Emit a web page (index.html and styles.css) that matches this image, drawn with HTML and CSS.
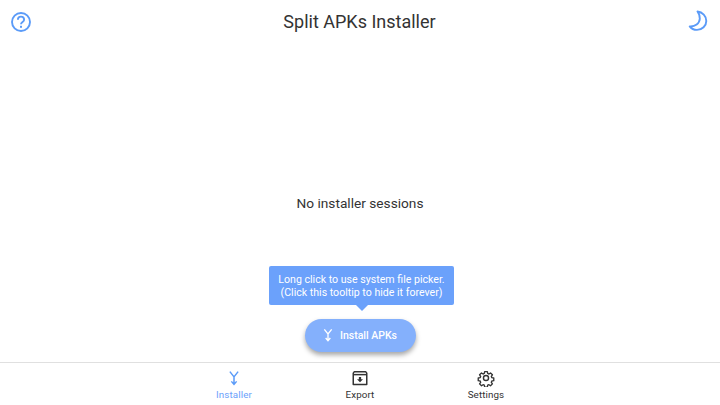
FILE: index.html
```html
<!DOCTYPE html>
<html>
<head>
<meta charset="utf-8">
<title>Split APKs Installer</title>
<link rel="stylesheet" href="styles.css">
</head>
<body>
<div class="app">
  <header class="top">
    <svg class="ico" viewBox="0 0 24 24" width="24" height="24"><circle cx="12" cy="12" r="9" fill="none" stroke="#5b9bf8" stroke-width="1.900"/><path d="M8.900 9.700a3.100 3.100 0 0 1 6.200 0c0 2.200-3.100 2.300-3.100 4.500" fill="none" stroke="#5b9bf8" stroke-width="1.900"/><rect x="11" y="15.800" width="2" height="2" fill="#5b9bf8"/></svg>
    <h1 class="title">Split APKs Installer</h1>
    <svg class="ico" viewBox="0 0 24 24" width="24" height="24"><path d="M11.500 1.500c5 .6 8.800 4.500 8.800 9.400 0 5-4.200 9-9.300 9-3 0-5.700-1.300-7.300-3.500 5.400.4 9.800-2.800 10.100-7.600.1-2.800-.8-5.300-2.300-7.300z" fill="none" stroke="#5b9bf8" stroke-width="1.900" stroke-linejoin="round"/></svg>
  </header>
  <main class="main">
    <p class="empty">No installer sessions</p>
    <div class="tip">Long click to use system file picker.<br>(Click this tooltip to hide it forever)</div>
    <button class="fab">
      <svg viewBox="0 0 24 24" width="16" height="16"><path d="M6.500 3.500 12 10.500 17.500 3.500M12 10.500V20M8.500 16.500 12 20.500 15.500 16.500" fill="none" stroke="#fff" stroke-width="2"/></svg>
      <span>Install APKs</span>
    </button>
  </main>
  <nav class="nav">
    <div class="tab active">
      <svg viewBox="0 0 24 24" width="18" height="18"><path d="M6.500 3.500 12 10.500 17.500 3.500M12 10.500V20M8.500 16.500 12 20.500 15.500 16.500" fill="none" stroke="#5b9bf8" stroke-width="2"/></svg>
      <span>Installer</span>
    </div>
    <div class="tab">
      <svg viewBox="0 0 24 24" width="18" height="18"><path d="M4.500 3.500h15l1.500 2v15h-18v-15z" fill="none" stroke="#333" stroke-width="2" stroke-linejoin="round"/><path d="M3 7.500h18" stroke="#333" stroke-width="2"/><path d="M10.500 10.500h3v3h2.500L12 17.500 8 13.500h2.500z" fill="#333"/></svg>
      <span>Export</span>
    </div>
    <div class="tab">
      <svg viewBox="0 0 24 24" width="18" height="18"><path d="M10 2.500h4l.5 2.800 1.900.8 2.300-1.600 2.800 2.800-1.600 2.300.8 1.900 2.800.5v4l-2.800.5-.8 1.900 1.600 2.300-2.800 2.800-2.300-1.600-1.900.8-.5 2.800h-4l-.5-2.800-1.900-.8-2.300 1.600-2.800-2.800 1.600-2.300-.8-1.900-2.800-.5v-4l2.800-.5.8-1.900-1.600-2.300 2.800-2.800 2.300 1.600 1.900-.8z" fill="none" stroke="#333" stroke-width="2" stroke-linejoin="round" transform="translate(1.200 1.200) scale(.9)"/><circle cx="12" cy="12" r="3.400" fill="none" stroke="#333" stroke-width="1.900"/></svg>
      <span>Settings</span>
    </div>
  </nav>
</div>
</body>
</html>
```
FILE: styles.css
```css
* { box-sizing: border-box; }
html, body { margin: 0; padding: 0; background: #fff; }
.app {
  width: 720px;
  height: 405px;
  display: flex;
  flex-direction: column;
  font-family: Roboto, "Liberation Sans", sans-serif;
  overflow: hidden;
}
.top {
  height: 43px;
  flex: none;
  display: flex;
  align-items: center;
  justify-content: space-between;
  padding: 0 10px 0 9px;
}
.title {
  margin: 0;
  font-size: 18px;
  font-weight: 400;
  color: #333;
}
.main {
  flex: 1;
  display: flex;
  flex-direction: column;
  align-items: center;
  padding-top: 152px;
}
.empty {
  margin: 0 0 54px;
  height: 17px;
  line-height: 17px;
  font-size: 13.700px;
  color: #333;
}
.tip {
  position: relative;
  width: 185px;
  height: 38.500px;
  margin-left: 3px;
  background: #6ba1fb;
  color: #fff;
  border-radius: 2px;
  font-size: 10.600px;
  line-height: 13px;
  text-align: center;
  padding-top: 7px;
}
.tip::after {
  content: "";
  position: absolute;
  left: 86.500px;
  bottom: -6px;
  border-left: 6px solid transparent;
  border-right: 6px solid transparent;
  border-top: 6px solid #6ba1fb;
}
.fab {
  margin-top: 14px;
  width: 111px;
  height: 33px;
  border: 0;
  border-radius: 17px;
  background: #84b0fc;
  color: #fff;
  font: 500 10.500px Roboto, "Liberation Sans", sans-serif;
  display: flex;
  align-items: center;
  justify-content: center;
  gap: 4px;
  box-shadow: 0 3px 5px rgba(0,0,0,.35);
  padding: 0 3px 0 0;
}
.nav {
  height: 43px;
  flex: none;
  border-top: 1px solid #e0e0e0;
  display: flex;
  justify-content: center;
  padding-top: 6px;
}
.tab {
  width: 126px;
  display: flex;
  flex-direction: column;
  align-items: center;
  gap: 2px;
  font-size: 9.800px;
  line-height: 12px;
  letter-spacing: 0.1px;
  color: #333;
}
.tab.active { color: #6ba1fb; }
```
